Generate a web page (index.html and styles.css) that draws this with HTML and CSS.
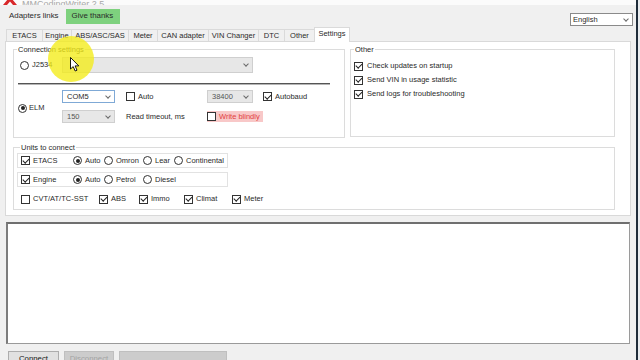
FILE: index.html
```html
<!DOCTYPE html>
<html lang="en">
  <head>
    <meta charset="UTF-8" />
    <title>MMCodingWriter 2.5</title>
    <link rel="stylesheet" href="styles.css">
  </head>
  <body>
    <div class="window">
      <div class="titlebar">
        <svg class="logo" width="16" height="12" viewBox="0 0 16 12">
          <path d="M1 0 L6 6 L1 12 L5 12 L8 8.5 L11 12 L15 12 L10 6 L15 0 L11 0 L8 3.5 L5 0 Z" fill="#d8282a" />
        </svg>
        <span class="app-title">MMCodingWriter 2.5</span>
      </div>

      <div class="topbar">
        <span class="flat-btn">Adapters links</span>
        <span class="thanks-btn">Give thanks</span>
        <span class="combo lang">English<span class="chev"></span></span>
      </div>

      <div class="tabs">
        <span class="tab t-etacs">ETACS</span>
        <span class="tab t-engine">Engine</span>
        <span class="tab t-abs">ABS/ASC/SAS</span>
        <span class="tab t-meter">Meter</span>
        <span class="tab t-can">CAN adapter</span>
        <span class="tab t-vin">VIN Changer</span>
        <span class="tab t-dtc">DTC</span>
        <span class="tab t-other">Other</span>
        <span class="tab t-settings active">Settings</span>
      </div>

      <div class="tab-page">
        <div class="group-row">
          <fieldset class="group conn">
            <legend>Connection settings</legend>
            <div class="j-row">
              <span class="opt j-opt"><span class="rb"></span>J2534</span>
              <span class="combo off j-combo"><span></span><span class="chev"></span></span>
            </div>
            <div class="sep"></div>
            <div class="elm">
              <span class="opt elm-opt"><span class="rb on"></span>ELM</span>
              <div class="elm-grid">
                <span class="combo focus small">COM5<span class="chev"></span></span>
                <span class="opt"><span class="cb"></span>Auto</span>
                <span class="combo off baud">38400<span class="chev"></span></span>
                <span class="opt"><span class="cb on"></span>Autobaud</span>
                <span class="combo off small">150<span class="chev"></span></span>
                <span class="opt">Read timeout, ms</span>
                <span class="opt warn"><span class="cb"></span>Write blindly</span>
                <span></span>
              </div>
            </div>
          </fieldset>

          <fieldset class="group other">
            <legend>Other</legend>
            <div class="check-list">
              <span class="opt"><span class="cb on"></span>Check updates on startup</span>
              <span class="opt"><span class="cb on"></span>Send VIN in usage statistic</span>
              <span class="opt"><span class="cb on"></span>Send logs for troubleshooting</span>
            </div>
          </fieldset>
        </div>

        <fieldset class="group units">
          <legend>Units to connect</legend>
          <div class="unit-panel">
            <span class="opt"><span class="cb on"></span>ETACS</span>
            <span class="opt"><span class="rb on"></span>Auto</span>
            <span class="opt"><span class="rb"></span>Omron</span>
            <span class="opt"><span class="rb"></span>Lear</span>
            <span class="opt"><span class="rb"></span>Continental</span>
          </div>
          <div class="unit-panel">
            <span class="opt"><span class="cb on"></span>Engine</span>
            <span class="opt"><span class="rb on"></span>Auto</span>
            <span class="opt"><span class="rb"></span>Petrol</span>
            <span class="opt"><span class="rb"></span>Diesel</span>
          </div>
          <div class="unit-row">
            <span class="opt"><span class="cb"></span>CVT/AT/TC-SST</span>
            <span class="opt"><span class="cb on"></span>ABS</span>
            <span class="opt"><span class="cb on"></span>Immo</span>
            <span class="opt"><span class="cb on"></span>Climat</span>
            <span class="opt"><span class="cb on"></span>Meter</span>
          </div>
        </fieldset>
      </div>

      <div class="log"></div>

      <div class="buttons">
        <span class="btn connect">Connect</span>
        <span class="btn disabled disconnect">Disconnect</span>
        <span class="btn disabled progress"></span>
      </div>

      <!-- screen recorder cursor highlight -->
      <div class="spot"></div>
      <svg class="pointer" width="10" height="15" viewBox="0 0 10 15">
        <path d="M0.5 0.5 L0.5 12 L3.2 9.6 L5.2 14 L7 13.2 L5.1 8.9 L8.8 8.9 Z" fill="#fff" stroke="#000" stroke-width="0.9" stroke-linejoin="round" />
      </svg>
    </div>
  </body>
</html>
```

FILE: styles.css
```css
* {
  box-sizing: border-box;
}
body {
  margin: 0;
  padding: 0;
  background-color: #e9ecef;
  font-family: "Liberation Sans", Arial, sans-serif;
  font-size: 7.5px;
  line-height: 1;
  color: #2a2a2a;
}
.window {
  position: relative;
  width: 638px;
  height: 360px;
  overflow: hidden;
  background: #f0f0f0;
  border-right: 2px solid #1f2c3a;
  display: flex;
  flex-direction: column;
}

/* title bar, cut off at the top */
.titlebar {
  height: 5px;
  flex: none;
  overflow: hidden;
  background: #fbfbfb;
  display: flex;
  align-items: flex-end;
  padding-left: 2px;
  gap: 4px;
}
.app-title {
  font-size: 9px;
  line-height: 9px;
  color: #a8a8a8;
  margin-bottom: -4px;
}

.topbar {
  height: 22px;
  flex: none;
  display: flex;
  align-items: center;
  padding: 0 3px 0 5px;
}
.flat-btn {
  height: 15px;
  display: flex;
  align-items: center;
  padding: 0 4px;
  font-size: 7.9px;
}
.thanks-btn {
  height: 15px;
  display: flex;
  align-items: center;
  margin-left: 3px;
  padding: 0 7px 0 6px;
  background: #7ed17e;
  font-size: 7.9px;
}

.combo {
  display: flex;
  align-items: center;
  justify-content: space-between;
  height: 13px;
  padding: 0 4px 0 4px;
  background: #fff;
  border: 1px solid #a5a5a5;
}
.combo.off {
  background: #e7e7e7;
  border-color: #cfcfcf;
  color: #555;
}
.combo.focus {
  border-color: #7fa9d6;
}
.chev {
  width: 4px;
  height: 4px;
  margin-top: -2px;
  border-right: 1px solid #6a6a6a;
  border-bottom: 1px solid #6a6a6a;
  transform: rotate(45deg);
}
.lang {
  margin-left: auto;
  align-self: flex-end;
  margin-bottom: 1px;
  width: 63px;
  border-color: #8a8a8a;
  padding-left: 2px;
}

/* tab strip */
.tabs {
  height: 15px;
  flex: none;
  display: flex;
  align-items: flex-end;
  padding-left: 6px;
  margin-bottom: -1px;
}
.tab {
  height: 13px;
  display: flex;
  align-items: center;
  justify-content: center;
  background: #f0f0f0;
  border: 1px solid #dadada;
  border-bottom: none;
  margin-right: -1px;
  padding-bottom: 1px;
}
.tab.active {
  height: 15px;
  background: #fff;
  position: relative;
  z-index: 1;
  padding-bottom: 2px;
}
.t-etacs { width: 37px; }
.t-engine { width: 30px; }
.t-abs { width: 58px; }
.t-meter { width: 30px; }
.t-can { width: 52px; }
.t-vin { width: 51px; }
.t-dtc { width: 27px; }
.t-other { width: 31px; }
.t-settings { width: 36px; }

.tab-page {
  height: 175px;
  flex: none;
  margin: 0 5px;
  background: #fff;
  border: 1px solid #d9d9d9;
  padding: 3px 0 0 7px;
  display: flex;
  flex-direction: column;
  gap: 5px;
}
.group-row {
  display: flex;
  gap: 5px;
}
.group {
  margin: 0;
  padding: 0;
  border: 1px solid #dcdcdc;
  min-width: 0;
}
.group legend {
  margin-left: 3px;
  padding: 0 1px;
  line-height: 9px;
}

/* shared controls */
.opt {
  display: flex;
  align-items: center;
  gap: 3px;
  white-space: nowrap;
}
.rb,
.cb {
  flex: none;
  width: 9px;
  height: 9px;
  border: 1px solid #333;
  background: #fff;
  display: flex;
  align-items: center;
  justify-content: center;
}
.rb {
  border-radius: 50%;
}
.rb.on::after {
  content: "";
  width: 4px;
  height: 4px;
  border-radius: 50%;
  background: #222;
}
.cb.on::after {
  content: "";
  width: 2.5px;
  height: 5px;
  margin-top: -1.5px;
  border-right: 1px solid #222;
  border-bottom: 1px solid #222;
  transform: rotate(45deg);
}

/* connection settings */
.conn {
  width: 332px;
  height: 93px;
}
.j-row {
  display: flex;
  align-items: center;
  height: 16px;
  margin-top: 3px;
  padding-left: 6px;
}
.j-opt {
  width: 42px;
}
.j-combo {
  width: 191px;
  height: 16px;
}
.sep {
  width: 312px;
  margin: 10px 0 0 4px;
  border-top: 1px solid #555;
  border-bottom: 1px solid #b5b5b5;
}
.elm {
  display: flex;
  align-items: center;
  margin-top: 5px;
  padding-left: 4px;
}
.elm-opt {
  width: 44px;
  gap: 2px;
  margin-top: 3px;
}
.elm-grid {
  display: grid;
  grid-template-columns: 64px 81px 56px auto;
  grid-template-rows: 13px 13px;
  row-gap: 7px;
  align-items: center;
}
.combo.small {
  width: 53px;
}
.combo.baud {
  width: 46px;
}
.warn {
  height: 11px;
  width: 56px;
  background: #f8c8c8;
  color: #e2403f;
}

/* other */
.other {
  width: 265px;
  height: 92px;
}
.check-list {
  display: flex;
  flex-direction: column;
  margin-top: 5px;
  padding-left: 3px;
}
.check-list .opt {
  height: 14px;
  gap: 4px;
}

/* units to connect */
.units {
  width: 602px;
  height: 67px;
  padding: 0 3px;
}
.unit-panel {
  width: 211px;
  height: 15px;
  margin-top: 1px;
  margin-bottom: 4px;
  border: 1px solid #e2e2e2;
  padding-left: 3px;
  display: grid;
  grid-template-columns: 52px 31px 39px 31px auto;
  align-items: center;
}
.unit-row {
  height: 12px;
  margin-top: 6px;
  padding-left: 4px;
  display: grid;
  grid-template-columns: 78px 40px 45px 48px auto;
  align-items: center;
}

.log {
  height: 122px;
  flex: none;
  margin: 6px 6px 0 6px;
  background: #fff;
  border: 1px solid #9a9a9a;
  border-top: 2px solid #6f6f6f;
  border-left: 2px solid #7c7c7c;
}

.buttons {
  display: flex;
  gap: 5px;
  margin-top: 7px;
  padding-left: 8px;
}
.btn {
  height: 16px;
  display: flex;
  align-items: center;
  justify-content: center;
  background: #e1e1e1;
  border: 1px solid #adadad;
  font-size: 7.8px;
  color: #111;
}
.btn.disabled {
  background: #cccccc;
  border-color: #bfbfbf;
  color: #a3a3a3;
}
.connect { width: 51px; }
.disconnect { width: 50px; }
.progress {
  width: 108px;
  background: #e6e6e6;
  border-color: #cdcdcd;
}

/* cursor highlight of the recording */
.spot {
  position: absolute;
  left: 48px;
  top: 36px;
  width: 46px;
  height: 46px;
  border-radius: 50%;
  background: rgba(244, 236, 24, 0.78);
}
.pointer {
  position: absolute;
  left: 70px;
  top: 57px;
}
```
